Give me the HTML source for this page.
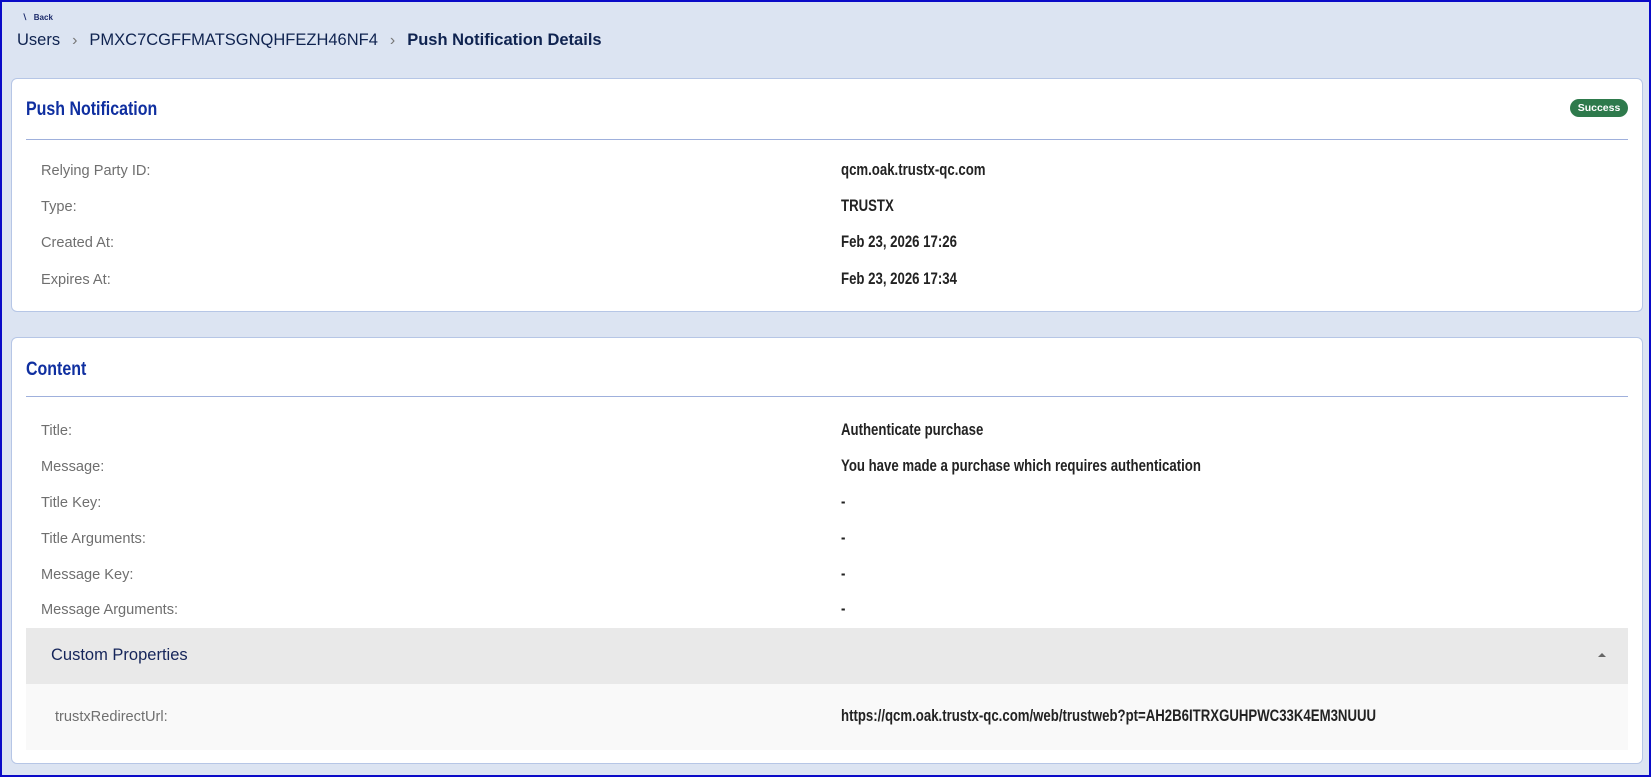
<!DOCTYPE html>
<html><head><meta charset="utf-8"><style>
*{box-sizing:border-box;margin:0;padding:0}
html,body{width:1651px;height:777px;overflow:hidden}
body{background:#dce4f2;font-family:"Liberation Sans",sans-serif;position:relative;border:2px solid #0a0ac8;}
.abs{position:absolute;white-space:nowrap}
.back{left:20px;top:11px;font-size:8px;color:#1b2a6b;font-weight:bold}
.bc{left:15px;top:29px;font-size:16.5px;color:#0f2350}
.bc .sep{color:#777;margin:0 12px;font-size:16px}
.bc b{font-size:16.5px}
.card{position:absolute;left:9px;width:1632px;background:#fff;border:1px solid #b6c6e6;border-radius:6px}
.ct{position:absolute;left:14px;font-weight:bold;color:#0f2fa0;font-size:19px;transform:scaleX(.84);transform-origin:left center;white-space:nowrap}
.line{position:absolute;left:14px;right:14px;height:1px;background:#9fb0dc}
.lab{position:absolute;left:29px;font-size:14.6px;color:#6f6f6f;white-space:nowrap;margin-top:1px}
.val{position:absolute;left:829px;font-size:16.5px;font-weight:bold;color:#222;white-space:nowrap;transform:scaleX(.8);transform-origin:left center;margin-top:-1px}
.badge{position:absolute;left:1558px;top:20px;width:58px;height:18px;background:#2e7a4c;color:#fff;border-radius:9px;font-size:10.5px;font-weight:bold;text-align:center;line-height:18px}
</style></head><body>
<div class="abs back">&#8726;&nbsp;&nbsp;&nbsp;Back</div>
<div class="abs bc">Users<span class="sep">›</span>PMXC7CGFFMATSGNQHFEZH46NF4<span class="sep">›</span><b>Push Notification Details</b></div>

<div class="card" style="top:76px;height:234px">
  <div class="ct" style="top:20px">Push Notification</div>
  <div class="badge">Success</div>
  <div class="line" style="top:60px"></div>
  <div class="lab" style="top:83px">Relying Party ID:</div><div class="val" style="top:83px">qcm.oak.trustx-qc.com</div>
  <div class="lab" style="top:119px">Type:</div><div class="val" style="top:119px">TRUSTX</div>
  <div class="lab" style="top:155px">Created At:</div><div class="val" style="top:155px">Feb 23, 2026 17:26</div>
  <div class="lab" style="top:192px">Expires At:</div><div class="val" style="top:192px">Feb 23, 2026 17:34</div>
</div>

<div class="card" style="top:335px;height:427px">
  <div class="ct" style="top:21px">Content</div>
  <div class="line" style="top:58px"></div>
  <div class="lab" style="top:84px">Title:</div><div class="val" style="top:84px">Authenticate purchase</div>
  <div class="lab" style="top:120px">Message:</div><div class="val" style="top:120px">You have made a purchase which requires authentication</div>
  <div class="lab" style="top:156px">Title Key:</div><div class="val" style="top:156px">-</div>
  <div class="lab" style="top:192px">Title Arguments:</div><div class="val" style="top:192px">-</div>
  <div class="lab" style="top:228px">Message Key:</div><div class="val" style="top:228px">-</div>
  <div class="lab" style="top:263px">Message Arguments:</div><div class="val" style="top:263px">-</div>
  <div style="position:absolute;left:14px;right:14px;top:290px;height:56px;background:#e9e9e9">
    <div style="position:absolute;left:25px;top:18px;font-size:16.5px;color:#15255a">Custom Properties</div>
    <div style="position:absolute;right:22px;top:25px;width:0;height:0;border-left:4px solid transparent;border-right:4px solid transparent;border-bottom:4px solid #666"></div>
  </div>
  <div style="position:absolute;left:14px;right:14px;top:346px;height:66px;background:#f9f9f9">
    <div class="lab" style="left:29px;top:24px">trustxRedirectUrl:</div>
    <div class="val" style="left:815px;top:24px;transform:scaleX(.8)">https://qcm.oak.trustx-qc.com/web/trustweb?pt=AH2B6ITRXGUHPWC33K4EM3NUUU</div>
  </div>
</div>
</body></html>
